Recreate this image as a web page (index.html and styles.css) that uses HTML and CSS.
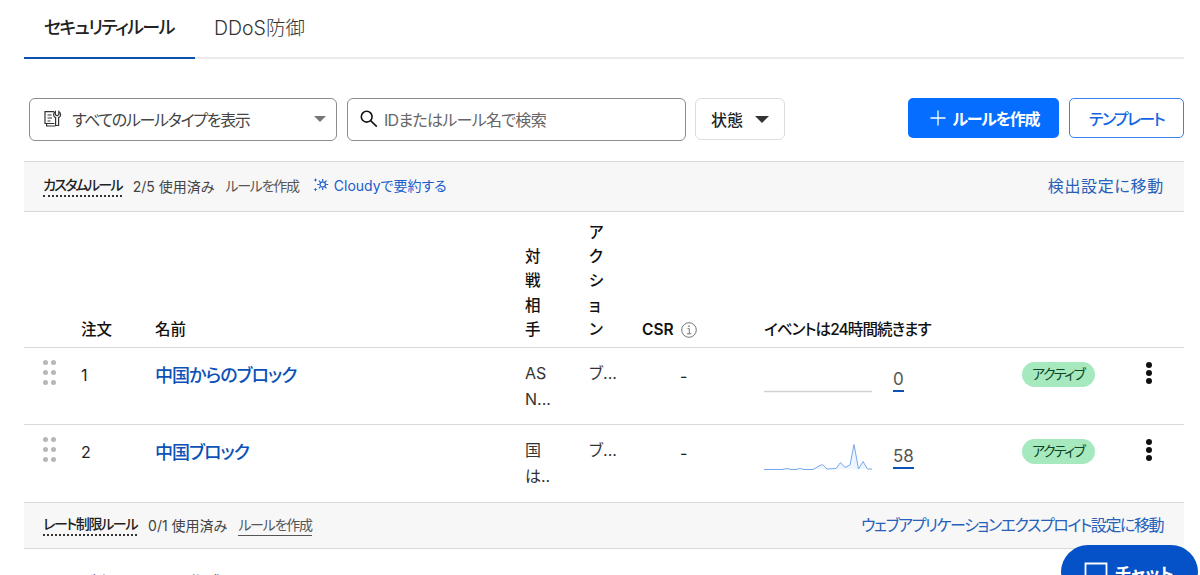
FILE: index.html
```html
<!DOCTYPE html>
<html lang="ja">
<head>
  <meta charset="UTF-8">
  <meta name="viewport" content="width=device-width, initial-scale=1.0">
  <title>セキュリティルール</title>
  <link rel="stylesheet" href="styles.css">
</head>
<body>

  <div class="page">
    <nav class="tabs">
      <a class="tab active"><span class="t-tab1">セキュリティルール</span></a>
      <a class="tab ddos">DDoS防御</a>
    </nav>

    <div class="toolbar">
      <div class="field select">
        <svg width="18" height="18" viewBox="0 0 18 18" fill="none" stroke="#333" stroke-width="1.2">
          <path d="M10 1.600H1v11.900h1.600v2.500h8.900M2.600 13.500h7.900M3.500 5h4M3.500 8h4.500M3.500 11h3"/>
          <path d="M11.400 1.500c-2.500 1.700-2.400 4.700.2 6.100v7.900h3V7.600c2.600-1.400 2.700-4.400.2-6.100v3.200l-1.700 1-1.700-1z"/>
        </svg>
        <span class="t-select">すべてのルールタイプを表示</span>
        <i class="caret"></i>
      </div>
      <div class="field search">
        <svg width="18" height="18" viewBox="0 0 18 18" fill="none" stroke="#111" stroke-width="1.6">
          <circle cx="6.700" cy="6.700" r="5.400"/><path d="M10.600 10.600l6.200 6"/>
        </svg>
        <span class="t-search">IDまたはルール名で検索</span>
      </div>
      <div class="state"><span>状態</span><i class="caret dark"></i></div>
      <div class="actions">
        <button class="btn primary">
          <svg width="16" height="16" viewBox="0 0 16 16" stroke="#fff" stroke-width="1.3"><path d="M8 .5v15M.5 8h15"/></svg>
          <span class="t-create">ルールを作成</span>
        </button>
        <button class="btn outline"><span class="t-template">テンプレート</span></button>
      </div>
    </div>

    <div class="section">
      <span class="section-name t-custom">カスタムルール</span>
      <span class="used">2/5 使用済み</span>
      <span class="make">ルールを作成</span>
      <a class="cloudy">
        <svg width="16" height="16" viewBox="0 0 16 16" fill="none" stroke="#1a5ccc" stroke-width="1.2">
          <circle cx="9.700" cy="7.500" r="2.700"/>
          <path d="M9.700 2v2M9.700 11v2M4.200 7.500h2M13.200 7.500h2M5.900 3.700l1.400 1.400M12.100 9.900l1.400 1.400M13.500 3.700l-1.400 1.400M7.300 9.900l-1.400 1.400"/>
          <path fill="#1a5ccc" stroke="none" d="M2.500 1l.6 1.400 1.400.6-1.400.6-.6 1.400-.6-1.400L.5 3l1.400-.6zM2.500 10.500l.6 1.400 1.400.6-1.400.6-.6 1.400-.6-1.400-1.400-.6 1.400-.6z"/>
        </svg>
        <span>Cloudyで要約する</span>
      </a>
      <a class="goto t-goto1">検出設定に移動</a>
    </div>

    <div class="row head">
      <span></span>
      <span>注文</span>
      <span>名前</span>
      <span class="stack">対戦相手</span>
      <span class="stack">アクション</span>
      <span class="csr">CSR
        <svg width="16" height="16" viewBox="0 0 16 16" fill="none" stroke="#777"><circle cx="8" cy="8" r="7.300"/><path d="M6.500 6.700h1.800v5M6 11.800h4.300"/><circle cx="8" cy="4.200" r=".5"/></svg>
      </span>
      <span class="t-events">イベントは24時間続きます</span>
    </div>

    <div class="row rule">
      <span class="grip"><i></i><i></i><i></i><i></i><i></i><i></i></span>
      <span class="order">1</span>
      <a class="name">中国からのブロック</a>
      <span class="match">AS<br>N...</span>
      <span class="action">ブ...</span>
      <span class="dash">-</span>
      <svg class="spark" width="108" height="34" viewBox="0 0 108 34" fill="none"><path stroke="#d2d2d2" stroke-width="1.500" d="M0 26.500h108"/></svg>
      <span class="count"><b>0</b></span>
      <span class="status"><b class="badge">アクティブ</b></span>
      <span class="more"><i></i><i></i><i></i></span>
    </div>

    <div class="row rule second">
      <span class="grip"><i></i><i></i><i></i><i></i><i></i><i></i></span>
      <span class="order">2</span>
      <a class="name">中国ブロック</a>
      <span class="match">国<br>は..</span>
      <span class="action">ブ...</span>
      <span class="dash">-</span>
      <svg class="spark" width="108" height="34" viewBox="0 0 108 34">
        <path fill="#edf6fd" d="M0 26.500L49 26.500 54 23.500 58.500 21.500 63 26 72 25.500 76.500 19.500 81 24.500 86 22 90 1.500 94.500 26 99 18.500 103.500 26z"/>
        <path fill="none" stroke="#75a8ee" d="M0 26.500h18l5-1 4 1h5l4-1 4 1h9l5-3 4.500-2 4.500 4.500 9-.5 4.500-6 4.500 5 5-2.500 4-20.500 4.500 24.500 4.500-7.500 4.500 7.500h4.500"/>
      </svg>
      <span class="count"><b>58</b></span>
      <span class="status"><b class="badge">アクティブ</b></span>
      <span class="more"><i></i><i></i><i></i></span>
    </div>

    <div class="section rate">
      <span class="section-name t-rate">レート制限ルール</span>
      <span class="used">0/1 使用済み</span>
      <span class="make underlined">ルールを作成</span>
      <a class="goto t-goto2">ウェブアプリケーションエクスプロイト設定に移動</a>
    </div>
    <p class="empty">レート制限ルールは作成されていません</p>
  </div>

  <div class="chat">
    <svg width="24" height="24" viewBox="0 0 24 24" fill="none" stroke="#fff" stroke-width="1.800"><path d="M1.500 1.500h21v15h-12l-5 5v-5h-4z"/></svg>
    <span>チャット</span>
  </div>

</body>
</html>
```
FILE: styles.css
```css
* { box-sizing: border-box; }
body {
  margin: 0;
  height: 575px;
  overflow: hidden;
  background: #fff;
  color: #222;
  font-family: Inter, "Noto Sans CJK JP", sans-serif;
  font-size: 16px;
  font-feature-settings: "palt";
}
.page { width: 1160px; margin-left: 24px; white-space: nowrap; }
i { display: block; }

.tabs { display: flex; height: 59px; border-bottom: 2px solid #ebebeb; }
.tab { height: 59px; padding: 14px 20px 0; font-size: 18px; line-height: 27px; color: #555; }
.tab.active { width: 171px; color: #222; font-weight: 500; border-bottom: 2px solid #0b51b3; }
.tab.ddos { padding: 15px 0 0 19px; font-size: 19.500px; font-weight: 300; color: #333; }

.toolbar { display: flex; height: 102px; padding: 39px 0 0 5px; align-items: flex-start; }
.field { display: flex; align-items: center; height: 43px; padding-bottom: 1px; border: 1px solid #8c8c8c; border-radius: 6px; }
.select { width: 308px; padding: 0 10px 1px 14px; gap: 10px; color: #444; margin-right: 10px; }
.search { width: 339px; padding-left: 12px; gap: 6px; color: #666; margin-right: 9px; }
.caret { margin-left: auto; border: 6px solid transparent; border-top-color: #777; border-bottom: 0; }
.caret.dark { margin-left: 12px; border-width: 7px 7px 0; border-top-color: #333; }
.state { display: flex; align-items: center; width: 90px; height: 42px; padding-left: 15px; border: 1px solid #ddd; border-radius: 6px; font-weight: 500; }
.actions { display: flex; gap: 10px; margin-left: auto; }
.btn { display: flex; align-items: center; justify-content: center; height: 40px; padding: 0; border-radius: 5px; font: inherit; font-weight: 500; white-space: nowrap; }
.primary { width: 151px; gap: 7px; padding-left: 2px; background: #056dff; color: #fff; border: 0; font-weight: 700; }
.outline { width: 115px; background: #fff; color: #1465e4; border: 1px solid #3b82f0; }

.section { display: flex; align-items: center; height: 51px; padding: 0 20px 1px 19px; background: #f7f7f8; border-top: 1px solid #d9d9d9; border-bottom: 1px solid #d9d9d9; font-size: 14px; }
.section-name { font-weight: 500; line-height: 20px; border-bottom: 2px dotted #333; }
.used { margin-left: 11px; color: #444; }
.make { margin-left: 11px; color: #555; line-height: 20px; letter-spacing: -1.250px; }
.underlined { border-bottom: 1px solid #555; }
.cloudy { display: flex; align-items: center; margin: -2px 0 0 14px; gap: 5px; color: #1a5ccc; }
.goto { margin: -2px 0 0 auto; color: #2660b8; font-size: 16px; }

/* tighter kana */
.t-tab1 { letter-spacing: -1.650px; }
.t-select { letter-spacing: -1.300px; }
.t-search { letter-spacing: -.700px; }
.t-create { letter-spacing: -1.200px; }
.t-template { letter-spacing: -1.700px; }
.t-custom { letter-spacing: -1.750px; }
.t-rate { letter-spacing: -1.350px; }
.t-goto1 { letter-spacing: .700px; }
.t-goto2 { letter-spacing: -1.450px; margin-right: 1px; }
.t-events { letter-spacing: -.900px; }

.row { display: grid; grid-template-columns: 57px 74px 370px 64px 53px 122px 129px 129px 113px 49px; border-bottom: 1px solid #d9d9d9; }
.head { height: 136px; align-items: end; padding-bottom: 5px; font-size: 15.500px; line-height: 24.200px; font-weight: 500; color: #111; }
.stack { width: 16px; white-space: normal; word-break: break-all; line-break: anywhere; }
.csr { display: flex; align-items: center; gap: 7px; font-weight: 600; }
.rule { height: 77px; }
.rule.second { height: 78px; }
.grip { display: grid; grid-template-columns: 5px 5px; gap: 5px 3px; align-content: start; padding: 12px 0 0 19px; }
.grip i { width: 5px; height: 5px; border-radius: 50%; background: #b7b7b7; }
.order { padding-top: 17px; line-height: 20px; }
.name { padding-top: 14px; font-size: 18px; line-height: 27px; font-weight: 500; color: #0b51b8; letter-spacing: -.950px; }
.match { padding-top: 12px; line-height: 26px; color: #333; }
.action { padding-top: 12px; line-height: 26px; color: #333; }
.dash { padding: 18px 0 0 38px; line-height: 20px; }
.spark { margin-top: 17px; }
.second .spark { margin-top: 18px; }
.count { padding-top: 21px; line-height: 21px; font-size: 17px; color: #555; }
.count b { display: inline-block; font-weight: 400; border-bottom: 2px solid #0b51b8; }
.badge { display: block; width: 73px; height: 25px; padding-left: 10px; margin-top: 14px; border-radius: 13px; background: #a6e9be; color: #0d4525; font-size: 14px; line-height: 23px; font-weight: 400; letter-spacing: -1.500px; }
.more { display: flex; flex-direction: column; gap: 2px; padding: 14px 0 0 11px; }
.more i { width: 6px; height: 6px; border-radius: 50%; background: #111; }
.rate { height: 46px; border-top: 0; }
.empty { margin: 21px 0 0 20px; font-size: 17px; line-height: 27px; color: #444; }

/* floating chat launcher */
.chat { position: absolute; left: 1061px; top: 545px; width: 137px; height: 54px; border-radius: 27px; background: #0551c7; color: #fff; display: flex; align-items: flex-start; padding: 17px 0 0 23px; gap: 7px; font-size: 17px; font-weight: 700; line-height: 24px; white-space: nowrap; }
```
